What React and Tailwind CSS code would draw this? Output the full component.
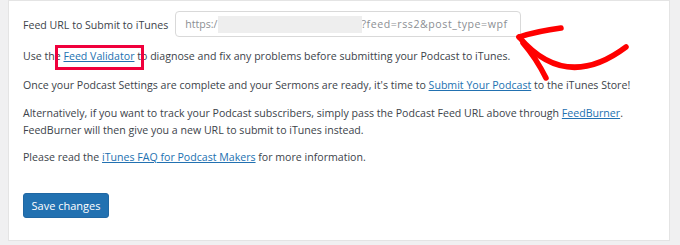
export default function App() {
  const font = { fontFamily: "'Open Sans', 'Noto Sans', sans-serif" };
  return (
    <div
      className="relative w-[680px] h-[245px] bg-[#f0f0f1] pl-[8px] pr-[10px] pb-[4px] overflow-hidden text-[10.6px] leading-[17px] text-[#3c434a]"
      style={font}
    >
      <div className="h-[241px] bg-white border border-[#e4e4e4] pl-[14px]">
        {/* Feed URL row */}
        <div className="flex items-center pt-[10px]">
          <span className="mt-[2px]">Feed URL to Submit to iTunes</span>
          <div className="ml-[7px] w-[346px] h-[26px] border border-[#d9d9d9] rounded-[4px] flex items-center pl-[9px] pr-[6px]">
            <div className="flex items-center flex-1 overflow-hidden whitespace-nowrap text-[#8c8f94]">
              <span>https:/</span>
              <span className="inline-block shrink-0 w-[144px] h-[17px] bg-[#eeeeee] blur-[0.5px]" />
              <span className="tracking-[0.55px]">?feed=rss2&amp;post_type=wpf</span>
            </div>
          </div>
        </div>

        <p className="mt-[11px]">
          Use the{" "}
          <a href="#" className="text-[#2271b1] underline">Feed Validator</a>{" "}
          to diagnose and fix any problems before submitting your Podcast to iTunes.
        </p>

        <p className="mt-[12px]">
          Once your Podcast Settings are complete and your Sermons are ready, it's time to{" "}
          <a href="#" className="text-[#2271b1] underline">Submit Your Podcast</a> to the iTunes Store!
        </p>

        <p className="mt-[11px]">
          Alternatively, if you want to track your Podcast subscribers, simply pass the Podcast Feed URL above through{" "}
          <a href="#" className="text-[#2271b1] underline">FeedBurner</a>.
          <br />
          FeedBurner will then give you a new URL to submit to iTunes instead.
        </p>

        <p className="mt-[10px]">
          Please read the{" "}
          <a href="#" className="text-[#2271b1] underline">iTunes FAQ for Podcast Makers</a> for more information.
        </p>

        <button className="mt-[27px] h-[25px] w-[86px] bg-[#2271b1] border border-[#2067a3] rounded-[3px] text-white text-[11px] flex items-center justify-center">
          Save changes
        </button>
      </div>

      {/* annotation: box around the validator link */}
      <div className="absolute left-[55px] top-[45px] w-[89px] h-[25px] border-[3px] border-[#f0003c]" />

      {/* annotation: hand drawn arrow */}
      <svg className="absolute inset-0 pointer-events-none" width="680" height="245" viewBox="0 0 680 245">
        <g fill="none" stroke="#ff0000" strokeWidth="5.5" strokeLinecap="round" strokeLinejoin="round">
          <path d="M519 37 Q538 31 561 28" />
          <path d="M519 37 Q566 92 626 47" />
          <path d="M523 43 Q536 58 546 78" />
        </g>
      </svg>
    </div>
  );
}
